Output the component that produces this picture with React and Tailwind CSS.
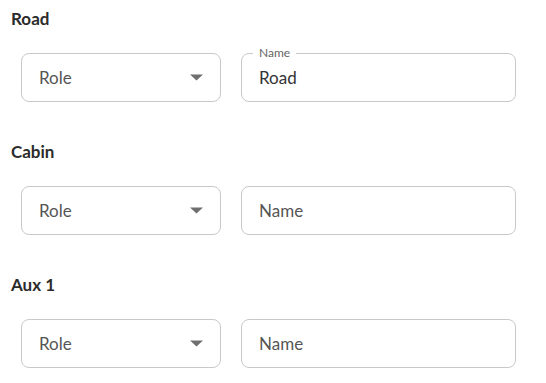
const sections = [
  { title: "Road", name: "Road" },
  { title: "Cabin", name: "" },
  { title: "Aux 1", name: "" },
];

function RoleSelect() {
  return (
    <div className="flex h-[49px] w-[200px] items-center justify-between rounded-[8px] border border-[#c9c9c9] pl-[17px] pr-[17px]">
      <span className="text-[17px] text-[#555555]">Role</span>
      <svg width="13" height="7" viewBox="0 0 13 7">
        <path d="M0 0.5h13L6.5 6.5z" fill="#6f6f6f" />
      </svg>
    </div>
  );
}

function NameField({ value }) {
  return (
    <div className="relative flex h-[49px] w-[275px] items-center rounded-[8px] border border-[#c9c9c9] pl-[17px]">
      {value ? (
        <>
          <span className="absolute -top-[9px] left-[11px] bg-white px-[6px] text-[12px] leading-[16px] text-[#666666]">
            Name
          </span>
          <span className="text-[17px] text-[#333333]">{value}</span>
        </>
      ) : (
        <span className="text-[17px] text-[#555555]">Name</span>
      )}
    </div>
  );
}

export default function App() {
  return (
    <div
      className="flex min-h-screen flex-col gap-[38px] bg-white pt-[7px] pl-[11px]"
      style={{ fontFamily: "Lato, 'Open Sans', sans-serif" }}
    >
      {sections.map((s) => (
        <div key={s.title} className="flex flex-col gap-[22px]">
          <h2 className="text-[17px] font-bold leading-[24px] text-[#2b2b2b]">{s.title}</h2>
          <div className="ml-[10px] flex gap-[20px]">
            <RoleSelect />
            <NameField value={s.name} />
          </div>
        </div>
      ))}
    </div>
  );
}
